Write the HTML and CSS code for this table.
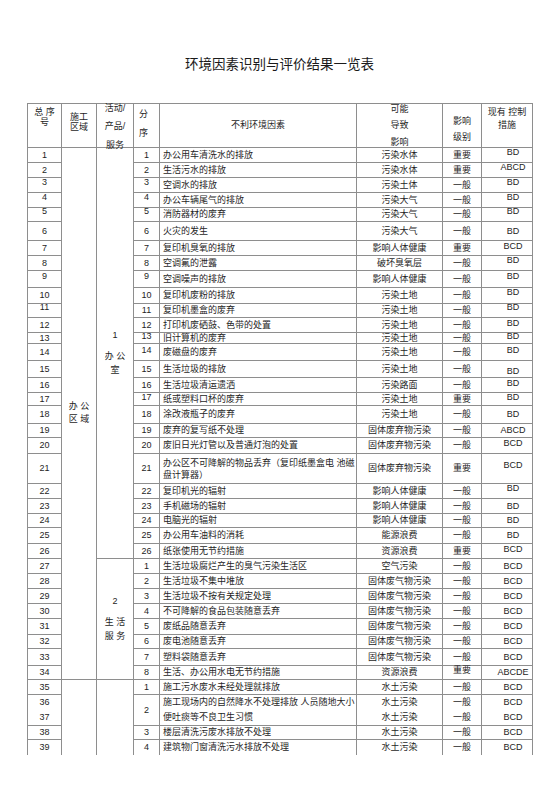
FILE: index.html
```html
<!DOCTYPE html>
<html lang="zh-CN">
<head>
<meta charset="utf-8">
<title>环境因素识别与评价结果一览表</title>
<link rel="stylesheet" href="styles.css">
</head>
<body>
<div class="page">
  <h1 class="title">环境因素识别与评价结果一览表</h1>
  <table class="sheet">
    <colgroup>
      <col class="c1"><col class="c2"><col class="c3"><col class="c4"><col class="c5"><col class="c6"><col class="c7"><col class="c8">
    </colgroup>
    <thead>
      <tr class="h44">
        <th><div class="hd-zx">总 序<br>号</div></th>
        <th><div class="hd-qy">施工<br>区域</div></th>
        <th><div class="hd-hd">活动/<br>产品/<br>服务</div></th>
        <th><div class="hd-fx">分<br>序</div></th>
        <th class="mid"><div>不利环境因素</div></th>
        <th><div class="hd-kn">可能<br>导致<br>影响</div></th>
        <th><div class="hd-jb">影响<br>级别</div></th>
        <th><div class="hd-cs">现有 控制<br>措施</div></th>
      </tr>
    </thead>
    <tbody>
      <tr class="h15"><td class="n">1</td><td rowspan="34" class="area"><div class="area-t">办 公<br>区 域</div></td><td rowspan="26" class="act"><div class="gn">1</div><div class="gt">办 公<br>室</div></td><td class="n">1</td><td class="t">办公用车清洗水的排放</td><td class="c">污染水体</td><td class="c">重要</td><td class="m"><span class="u">BD</span></td></tr>
      <tr class="h15"><td class="n">2</td><td class="n">2</td><td class="t">生活污水的排放</td><td class="c">污染水体</td><td class="c">重要</td><td class="m"><span class="u">ABCD</span></td></tr>
      <tr class="h15"><td class="n"><span class="u">3</span></td><td class="n"><span class="u">3</span></td><td class="t">空调水的排放</td><td class="c">污染土体</td><td class="c">一般</td><td class="m"><span class="u">BD</span></td></tr>
      <tr class="h15"><td class="n"><span class="u">4</span></td><td class="n"><span class="u">4</span></td><td class="t">办公车辆尾气的排放</td><td class="c">污染大气</td><td class="c">一般</td><td class="m"><span class="u">BD</span></td></tr>
      <tr class="h14"><td class="n"><span class="u">5</span></td><td class="n"><span class="u">5</span></td><td class="t">消防器材的废弃</td><td class="c">污染大气</td><td class="c">一般</td><td class="m"><span class="u">BD</span></td></tr>
      <tr class="h19"><td class="n">6</td><td class="n">6</td><td class="t">火灾的发生</td><td class="c">污染大气</td><td class="c">一般</td><td class="m">BD</td></tr>
      <tr class="h15"><td class="n">7</td><td class="n">7</td><td class="t">复印机臭氧的排放</td><td class="c">影响人体健康</td><td class="c">重要</td><td class="m"><span class="us">BCD</span></td></tr>
      <tr class="h15"><td class="n">8</td><td class="n">8</td><td class="t">空调氟的泄露</td><td class="c">破坏臭氧层</td><td class="c">一般</td><td class="m"><span class="u">BD</span></td></tr>
      <tr class="h17"><td class="n"><span class="u">9</span></td><td class="n"><span class="u">9</span></td><td class="t">空调噪声的排放</td><td class="c">影响人体健康</td><td class="c">一般</td><td class="m"><span class="u">BD</span></td></tr>
      <tr class="h16"><td class="n">10</td><td class="n">10</td><td class="t">复印机废粉的排放</td><td class="c">污染土地</td><td class="c">一般</td><td class="m"><span class="u">BD</span></td></tr>
      <tr class="h14"><td class="n"><span class="u">11</span></td><td class="n">11</td><td class="t">复印机墨盒的废弃</td><td class="c">污染土地</td><td class="c">一般</td><td class="m"><span class="u">BD</span></td></tr>
      <tr class="h15"><td class="n">12</td><td class="n">12</td><td class="t">打印机废硒鼓、色带的处置</td><td class="c">污染土地</td><td class="c">一般</td><td class="m"><span class="us">BD</span></td></tr>
      <tr class="h11"><td class="n">13</td><td class="n"><span class="us">13</span></td><td class="t">旧计算机的废弃</td><td class="c">污染土地</td><td class="c">一般</td><td class="m"><span class="us">BD</span></td></tr>
      <tr class="h17"><td class="n">14</td><td class="n"><span class="us">14</span></td><td class="t">废磁盘的废弃</td><td class="c">污染土地</td><td class="c">一般</td><td class="m"><span class="us">BD</span></td></tr>
      <tr class="h17"><td class="n">15</td><td class="n">15</td><td class="t">生活垃圾的排放</td><td class="c">污染土地</td><td class="c">一般</td><td class="m"><span class="d">BD</span></td></tr>
      <tr class="h15"><td class="n">16</td><td class="n">16</td><td class="t">生活垃圾清运遗洒</td><td class="c">污染路面</td><td class="c">一般</td><td class="m"><span class="us">BD</span></td></tr>
      <tr class="h13"><td class="n">17</td><td class="n"><span class="us">17</span></td><td class="t">纸或塑料口杯的废弃</td><td class="c">污染土地</td><td class="c">重要</td><td class="m"><span class="us">BD</span></td></tr>
      <tr class="h18"><td class="n">18</td><td class="n">18</td><td class="t">涂改液瓶子的废弃</td><td class="c">污染土地</td><td class="c">一般</td><td class="m">BD</td></tr>
      <tr class="h14"><td class="n">19</td><td class="n">19</td><td class="t">废弃的复写纸不处理</td><td class="c">固体废弃物污染</td><td class="c">一般</td><td class="m">ABCD</td></tr>
      <tr class="h16"><td class="n">20</td><td class="n">20</td><td class="t">废旧日光灯管以及普通灯泡的处置</td><td class="c">固体废弃物污染</td><td class="c">一般</td><td class="m"><span class="us">BCD</span></td></tr>
      <tr class="h30"><td class="n">21</td><td class="n">21</td><td class="t two">办公区不可降解的物品丢弃（复印纸墨盒电 池磁<br>盘计算器）</td><td class="c">固体废弃物污染</td><td class="c">重要</td><td class="m"><span class="u">BCD</span></td></tr>
      <tr class="h15"><td class="n">22</td><td class="n">22</td><td class="t">复印机光的辐射</td><td class="c">影响人体健康</td><td class="c">一般</td><td class="m"><span class="u">BD</span></td></tr>
      <tr class="h15"><td class="n">23</td><td class="n">23</td><td class="t">手机磁场的辐射</td><td class="c">影响人体健康</td><td class="c">一般</td><td class="m">BD</td></tr>
      <tr class="h14"><td class="n">24</td><td class="n">24</td><td class="t">电脑光的辐射</td><td class="c">影响人体健康</td><td class="c">一般</td><td class="m">BD</td></tr>
      <tr class="h16"><td class="n">25</td><td class="n">25</td><td class="t">办公用车油料的消耗</td><td class="c">能源浪费</td><td class="c">一般</td><td class="m">BD</td></tr>
      <tr class="h15"><td class="n">26</td><td class="n">26</td><td class="t">纸张使用无节约措施</td><td class="c">资源浪费</td><td class="c">重要</td><td class="m"><span class="us">BCD</span></td></tr>
      <tr class="h15"><td class="n">27</td><td rowspan="8" class="act"><div class="gn">2</div><div class="gt">生 活<br>服 务</div></td><td class="n">1</td><td class="t">生活垃圾腐烂产生的臭气污染生活区</td><td class="c">空气污染</td><td class="c">一般</td><td class="m">BCD</td></tr>
      <tr class="h15"><td class="n">28</td><td class="n">2</td><td class="t">生活垃圾不集中堆放</td><td class="c">固体废气物污染</td><td class="c">一般</td><td class="m">BCD</td></tr>
      <tr class="h15"><td class="n">29</td><td class="n">3</td><td class="t">生活垃圾不按有关规定处理</td><td class="c">固体废气物污染</td><td class="c">一般</td><td class="m">BCD</td></tr>
      <tr class="h15"><td class="n">30</td><td class="n">4</td><td class="t">不可降解的食品包装随意丢弃</td><td class="c">固体废气物污染</td><td class="c">一般</td><td class="m">BCD</td></tr>
      <tr class="h16"><td class="n">31</td><td class="n">5</td><td class="t">废纸品随意丢弃</td><td class="c">固体废气物污染</td><td class="c">一般</td><td class="m">BCD</td></tr>
      <tr class="h14"><td class="n">32</td><td class="n">6</td><td class="t">废电池随意丢弃</td><td class="c">固体废气物污染</td><td class="c">一般</td><td class="m">BCD</td></tr>
      <tr class="h17"><td class="n">33</td><td class="n">7</td><td class="t">塑料袋随意丢弃</td><td class="c">固体废气物污染</td><td class="c">一般</td><td class="m">BCD</td></tr>
      <tr class="h14"><td class="n">34</td><td class="n">8</td><td class="t">生活、办公用水电无节约措施</td><td class="c">资源浪费</td><td class="c"><span class="us">重要</span></td><td class="m">ABCDE</td></tr>
      <tr class="h15"><td class="n">35</td><td rowspan="4" class="nb"></td><td rowspan="4" class="nb"></td><td class="n">1</td><td class="t">施工污水废水未经处理就排放</td><td class="c">水土污染</td><td class="c">一般</td><td class="m">BCD</td></tr>
      <tr class="h31"><td class="n two2">36<br>37</td><td class="n">2</td><td class="t two2">施工现场内的自然降水不处理排放 人员随地大小<br>便吐痰等不良卫生习惯</td><td class="c two2">水土污染<br>水土污染</td><td class="c two2">一般<br>一般</td><td class="m two2">BCD<br>BCD</td></tr>
      <tr class="h14"><td class="n">38</td><td class="n">3</td><td class="t">楼层清洗污废水排放不处理</td><td class="c">水土污染</td><td class="c">一般</td><td class="m">BCD</td></tr>
      <tr class="h15 last"><td class="n">39</td><td class="n">4</td><td class="t">建筑物门窗清洗污水排放不处理</td><td class="c">水土污染</td><td class="c">一般</td><td class="m">BCD</td></tr>
    </tbody>
  </table>
</div>
</body>
</html>
```

FILE: styles.css
```css
html, body {
  margin: 0;
  padding: 0;
  background: #ffffff;
}

body {
  color: #1e1e1e;
  font-family: "Liberation Sans", "Noto Sans CJK SC", sans-serif;
}

.page {
  padding: 53px 0 0 27px;
}

.title {
  width: 505px;
  margin: 0 0 30px;
  text-align: center;
  font-family: "Noto Sans CJK SC", sans-serif;
  font-size: 13.5px;
  line-height: 20px;
  font-weight: normal;
  color: #1a1a1a;
}

.sheet {
  width: 505px;
  table-layout: fixed;
  border-collapse: collapse;
  font-size: 9px;
  line-height: 9px;
}

.c1 { width: 34px; }
.c2 { width: 35px; }
.c3 { width: 37px; }
.c4 { width: 26px; }
.c5 { width: 197px; }
.c6 { width: 86px; }
.c7 { width: 39px; }
.c8 { width: 51px; }

.sheet th,
.sheet td {
  border: 1px solid #8e8e8e;
  padding: 0;
  font-weight: normal;
  vertical-align: middle;
  text-align: center;
  white-space: nowrap;
  overflow: visible;
}

.sheet th {
  vertical-align: top;
}

.sheet th.mid {
  vertical-align: middle;
}

.hd-zx { padding-top: 4px; line-height: 9.5px; }
.hd-qy { padding-top: 9px; line-height: 9.5px; }
.hd-hd { margin-top: -5.5px; height: 40px; line-height: 18.5px; }
.hd-fx { padding-top: 1px; padding-right: 6px; line-height: 19.3px; }
.hd-kn { margin-top: -3.5px; height: 40px; line-height: 16.8px; }
.hd-jb { padding-top: 8.5px; line-height: 16.7px; }
.hd-cs { padding-top: 2px; line-height: 13.3px; }

.h11 { height: 11px; }
.h13 { height: 13px; }
.h14 { height: 14px; }
.h15 { height: 15px; }
.h16 { height: 16px; }
.h17 { height: 17px; }
.h18 { height: 18px; }
.h19 { height: 19px; }
.h30 { height: 30px; }
.h31 { height: 31px; }
.h44 { height: 44px; }

.sheet td.t {
  text-align: left;
  padding-left: 3px;
}

.sheet td.m {
  padding-left: 12px;
}

.u {
  display: block;
  margin: -3px 0 3px;
}

.us {
  display: block;
  margin: -2px 0 2px;
}

.d {
  display: block;
  margin: 2px 0 -2px;
}

.sheet td.two {
  line-height: 12px;
}

.sheet td.two2 {
  line-height: 15px;
}

.area-t {
  line-height: 13px;
  padding-bottom: 1px;
}

.gn {
  line-height: 11px;
  margin-bottom: 8px;
}

.gt {
  line-height: 14px;
}

.sheet td.nb,
.sheet tr.last td {
  border-bottom-style: hidden;
}
```
